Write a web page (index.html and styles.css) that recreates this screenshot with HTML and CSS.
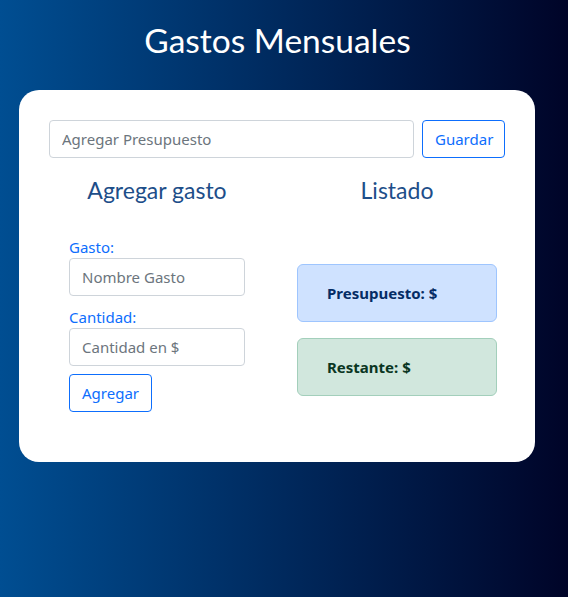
FILE: index.html
```html
<!DOCTYPE html>
<html lang="es">
<head>
<meta charset="utf-8">
<title>Gastos Mensuales</title>
<link rel="stylesheet" href="styles.css">
</head>
<body>
<header class="title">Gastos Mensuales</header>
<main class="card">
  <div class="budget-row">
    <input class="field field-wide" type="text" placeholder="Agregar Presupuesto">
    <button class="btn" type="button">Guardar</button>
  </div>
  <div class="cols">
    <section class="col">
      <h2 class="col-title">Agregar gasto</h2>
      <form class="expense-form">
        <label class="lbl" for="gasto">Gasto:</label>
        <input class="field" id="gasto" type="text" placeholder="Nombre Gasto">
        <label class="lbl" for="cantidad">Cantidad:</label>
        <input class="field" id="cantidad" type="text" placeholder="Cantidad en $">
        <button class="btn btn-add" type="button">Agregar</button>
      </form>
    </section>
    <section class="col">
      <h2 class="col-title">Listado</h2>
      <div class="summary">
        <div class="alert alert-blue">Presupuesto: $</div>
        <div class="alert alert-green">Restante: $</div>
      </div>
    </section>
  </div>
</main>
</body>
</html>
```
FILE: styles.css
```css
* { box-sizing: border-box; }
html, body { margin: 0; }
body {
  min-height: 597px;
  background: linear-gradient(to right, #004e92, #000428);
  font-family: "Noto Sans", "Open Sans", sans-serif;
  font-size: 16px;
  color: #212529;
}
.title {
  font-family: Lato, "Open Sans", sans-serif;
  font-weight: 400;
  font-size: 33.5px;
  line-height: 40px;
  color: #ffffff;
  text-align: center;
  padding-top: 20px;
  margin-left: -13px;
}
.card {
  margin: 30px 0 0 19px;
  width: 516px;
  background: #ffffff;
  border-radius: 20px;
  padding: 30px 30px 50px;
}
.budget-row {
  display: flex;
  gap: 8px;
}
.field {
  display: block;
  height: 38px;
  padding: 6px 12px;
  border: 1px solid #ced4da;
  border-radius: 4px;
  font: inherit;
  font-size: 15px;
  color: #212529;
  background: #fff;
  width: 100%;
}
.field::placeholder { color: #6c757d; }
.field-wide { flex: 1; }
.btn {
  height: 38px;
  padding: 6px 12px;
  border: 1px solid #0d6efd;
  border-radius: 4px;
  background: #fff;
  color: #0d6efd;
  font: inherit;
  font-size: 15px;
  width: 83px;
  flex: none;
}
.cols {
  display: grid;
  grid-template-columns: 1fr 1fr;
  margin: 0 -12px;
}
.col { padding: 0 12px; }
.col-title {
  font-family: Lato, "Open Sans", sans-serif;
  font-weight: 400;
  font-size: 23px;
  line-height: 28px;
  color: #1d4e89;
  text-align: center;
  margin: 18px 0 0;
}
.expense-form {
  display: flex;
  flex-direction: column;
  align-items: flex-start;
  padding: 32px 20px 0;
}
.lbl {
  color: #0d6efd;
  font-size: 15px;
  line-height: 22px;
}
.expense-form .field { margin-bottom: 10px; }
.expense-form .field:last-of-type { margin-bottom: 8px; }
.summary {
  display: flex;
  flex-direction: column;
  gap: 16px;
  padding: 60px 8px 0;
}
.alert {
  height: 58px;
  display: flex;
  align-items: center;
  padding: 0 29px;
  border: 1px solid;
  border-radius: 6px;
  font-weight: 700;
  font-size: 15px;
}
.alert-blue { background: #cfe2ff; border-color: #9ec5fe; color: #052c65; }
.alert-green { background: #d1e7dd; border-color: #a3cfbb; color: #0a3622; }
```
